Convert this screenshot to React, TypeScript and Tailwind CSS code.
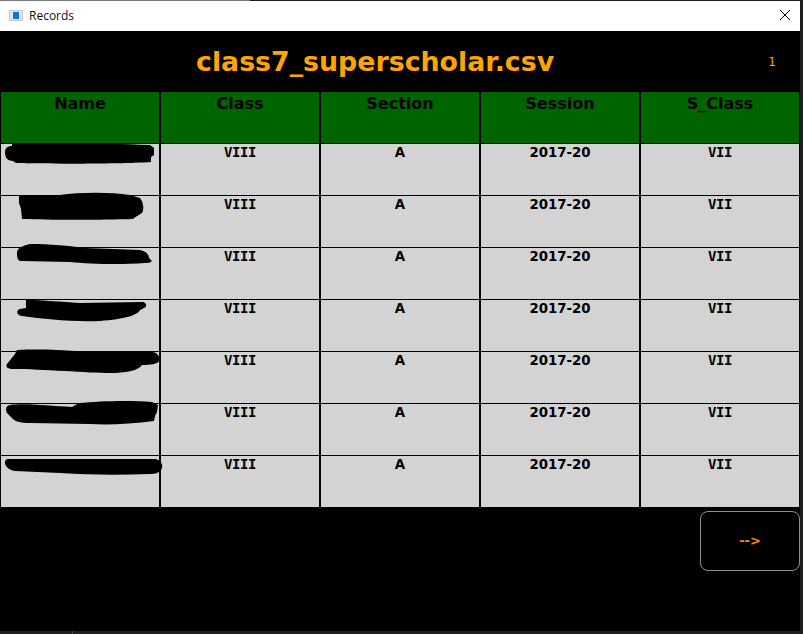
import React from 'react';

const columns = ['Name', 'Class', 'Section', 'Session', 'S_Class'];

// scribbles that hide the names, relative to each row's top left corner
const scribbles = [
  'M12 1 C50 -1 110 0 150 2 L154 5 L154 12 L151 14 L151 19 C120 21 50 21 16 20 L13 18 C7 18 5 14 5 9 C5 5 8 3 12 3 Z',
  'M19 1 L60 0 C80 -3 110 -3 130 0 L140 3 C144 8 144 15 142 18 L134 23 L133 24 C100 25 50 25 22 24 L21 14 L19 8 Z',
  'M17 6 C17 1 22 -1 30 -3 C50 -3 70 -1 85 1 L140 3 C146 4 149 8 149 11 L152 14 C151 15 150 16 145 16 C120 18 90 17 70 15 L22 14 C18 14 17 12 17 6 Z',
  'M26 1 C45 1 60 3 80 4 L143 3 C147 4 147 8 144 9 L140 11 C138 16 125 20 100 22 C70 23 45 20 22 17 C16 16 16 11 20 10 L26 9 Z',
  'M17 -1 C40 -2 60 -1 75 0 L153 1 C158 2 160 6 159 10 C158 13 150 14 142 14 C138 20 125 22 110 22 C90 22 40 18 14 18 C8 18 5 16 7 13 L15 3 Z',
  'M10 2 C25 0 50 3 72 4 L79 0 C100 -2 130 -3 152 -1 L158 2 L157 9 L155 13 L154 18 C130 21 110 22 90 21 L30 20 C20 20 14 18 12 15 L7 10 C5 6 6 3 10 2 Z',
  'M7 4 L155 4 C161 5 163 9 162 13 C160 18 155 19 150 19 C120 20 90 20 60 18 L15 16 C8 15 4 10 5 6 Z',
];

const sans = "font-['DejaVu_Sans',sans-serif]";
const cell = 'h-[52px] border-x border-t border-black bg-[#d3d3d3] text-center font-bold text-black';
const sansCell = `${cell} text-[13.33px] leading-[17px]`;
// the serifed I of the original only exists in the mono cut here
const romanCell = `${cell} font-['DejaVu_Sans_Mono',monospace] text-[14px] leading-4 tracking-[-0.4px]`;

export default function App() {
  return (
    <div className={`flex h-[634px] w-[803px] flex-col overflow-hidden bg-[#1f1f1f] ${sans}`}>
      <div className="h-px w-[250px] shrink-0 bg-[#777]" />

      {/* title bar */}
      <div className="flex h-[30px] w-[800px] shrink-0 items-center bg-white pl-[9px] pr-[9px]">
        <svg width="14" height="11" viewBox="0 0 14 11" className="mb-[2px] shrink-0">
          <rect width="14" height="11" fill="#c4c4c4" />
          <rect x="1" y="1" width="12" height="9" fill="#e4e4e4" />
          <rect x="4" y="2" width="6" height="7" fill="#0a78d7" />
        </svg>
        <span className="ml-[6px] font-['Open_Sans',sans-serif] text-xs text-[#111]">Records</span>
        <svg width="12" height="12" viewBox="0 0 12 12" className="mb-[2px] ml-auto">
          <path d="M1 1 L11 11 M11 1 L1 11" stroke="#000" strokeWidth="1" fill="none" />
        </svg>
      </div>

      {/* black client area */}
      <div className="flex h-[600px] w-[800px] shrink-0 flex-col bg-black">
        <div className="flex h-[61px] shrink-0 items-center pl-[196px] pr-[24px] pt-[1px]">
          <h1 className="text-[26.8px] font-bold text-[#ffa500]">class7_superscholar.csv</h1>
          <span className="ml-auto text-xs text-[#ffa500]">1</span>
        </div>

        <div className="grid w-[800px] grid-cols-5">
          {columns.map((c) => (
            <div key={c} className="h-[51px] border-x border-black bg-[#006400] text-center text-base font-bold leading-6 text-black">
              {c}
            </div>
          ))}
          {scribbles.map((d, i) => (
            <React.Fragment key={i}>
              <div className={`relative ${sansCell}`}>
                <svg width="160" height="52" viewBox="0 0 160 52" className="absolute -left-px -top-px z-10 overflow-visible">
                  <path d={d} fill="#000" />
                </svg>
              </div>
              <div className={romanCell}>VIII</div>
              <div className={sansCell}>A</div>
              <div className={sansCell}>2017-20</div>
              <div className={romanCell}>VII</div>
            </React.Fragment>
          ))}
        </div>

        <div className="flex justify-end pt-1">
          <button className="flex h-[60px] w-[100px] items-center justify-center rounded-lg border border-[#8a9494] bg-black text-[13px] font-bold text-[#ff8c00]">
            {'-->'}
          </button>
        </div>
      </div>

      <div className="ml-[72px] h-[3px] w-px bg-[#444]" />
    </div>
  );
}
